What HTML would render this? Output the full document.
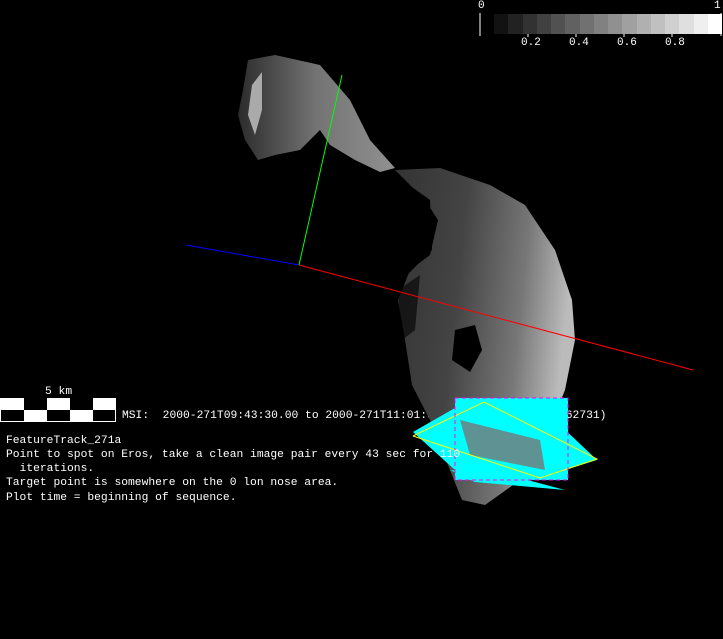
<!DOCTYPE html>
<html><head><style>
body{margin:0;background:#000;width:723px;height:639px;overflow:hidden;position:relative;font-family:"Liberation Mono",monospace;color:#fff}
.t{position:absolute;font-size:11.3px;white-space:pre;line-height:12px}
.c{position:absolute;font-size:11px;white-space:pre;line-height:12px}
</style></head><body>
<div class="t" style="left:122px;top:410px">MSI:  2000-271T09:43:30.00 to 2000-271T11:01:39.00 (6.</div>
<div class="t" style="left:559px;top:410px">462731)</div>
<svg width="723" height="639" style="position:absolute;left:0;top:0">
<defs>
<linearGradient id="g1" x1="0" y1="0" x2="1" y2="0"><stop offset="0" stop-color="#333"/><stop offset="0.5" stop-color="#888"/><stop offset="1" stop-color="#aaa"/></linearGradient>
<linearGradient id="g2" x1="0" y1="0" x2="1" y2="0.2"><stop offset="0" stop-color="#333"/><stop offset="0.4" stop-color="#444"/><stop offset="0.75" stop-color="#777"/><stop offset="1" stop-color="#bbb"/></linearGradient>
</defs>
<path d="M248,60 L275,55 L320,65 L350,100 L370,140 L395,168 L380,172 L355,160 L330,145 L320,130 L300,150 L275,155 L258,160 L245,140 L238,115 L243,90Z" fill="url(#g1)" opacity="0.85"/>
<path d="M252,85 L262,72 L262,110 L255,135 L248,115Z" fill="#aaa"/>
<path d="M395,170 L440,168 L490,185 L525,205 L555,250 L572,300 L575,340 L565,390 L545,440 L520,480 L485,505 L462,500 L450,470 L430,420 L412,385 L405,340 L398,300 L410,270 L430,255 L438,220 L425,200Z" fill="url(#g2)"/>
<path d="M395,175 L430,200 L432,250 L410,272 L395,285 L380,240Z" fill="#000"/>
<path d="M398,290 L420,275 L415,330 L402,340Z" fill="#000" opacity="0.6"/>
<path d="M455,330 L475,325 L482,350 L470,372 L452,360Z" fill="#000"/>
<line x1="186" y1="245" x2="299" y2="265" stroke="#00f" stroke-width="1"/>
<line x1="299" y1="265" x2="693" y2="370" stroke="#f00" stroke-width="1"/>
<line x1="299" y1="265" x2="342" y2="75" stroke="#0f0" stroke-width="1"/>
<polygon points="455,398 568,398 568,480 455,480" fill="#0ff"/>
<polygon points="413,432 455,408 455,470" fill="#0ff"/>
<polygon points="560,425 597,460 565,470" fill="#0ff"/>
<polygon points="450,470 520,478 565,490 475,482" fill="#0ff"/>
<polygon points="460,420 540,440 545,470 470,455" fill="#777" opacity="0.8"/>
<polyline points="413,436 484,402 597,459 540,478 413,436" fill="none" stroke="#ff0" stroke-width="1"/>
<rect x="455" y="398" width="113" height="82" fill="none" stroke="#f0f" stroke-dasharray="4,3"/>
<rect x="0" y="398" width="116" height="24" fill="#fff"/>
<g fill="#000"><rect x="24" y="398" width="23" height="12"/><rect x="70" y="398" width="23" height="12"/><rect x="1" y="410" width="23" height="11"/><rect x="47" y="410" width="23" height="11"/><rect x="93" y="410" width="22" height="11"/></g>
<line x1="480" y1="13" x2="480" y2="36" stroke="#fff"/>
<line x1="721" y1="13" x2="721" y2="36" stroke="#fff"/>
<g stroke="#fff"><line x1="528" y1="34" x2="528" y2="37"/><line x1="576" y1="34" x2="576" y2="37"/><line x1="624" y1="34" x2="624" y2="37"/><line x1="672" y1="34" x2="672" y2="37"/></g>
</svg>
<div id="bar" style="position:absolute;left:494px;top:14px;height:20px;width:228px;display:flex"></div>
<div class="c" style="left:478px;top:0px">0</div>
<div class="c" style="left:714px;top:0px">1</div>
<div class="c" style="left:521px;top:37px">0.2</div>
<div class="c" style="left:569px;top:37px">0.4</div>
<div class="c" style="left:617px;top:37px">0.6</div>
<div class="c" style="left:665px;top:37px">0.8</div>
<div class="t" style="left:45px;top:386px">5 km</div>
<div class="t" style="left:6px;top:435px">FeatureTrack_271a</div>
<div class="t" style="left:6px;top:449px">Point to spot on Eros, take a clean image pair every 43 sec for 110</div>
<div class="t" style="left:6px;top:463px">  iterations.</div>
<div class="t" style="left:6px;top:477px">Target point is somewhere on the 0 lon nose area.</div>
<div class="t" style="left:6px;top:492px">Plot time = beginning of sequence.</div>
<script>
var b=document.getElementById('bar');
for(var i=0;i<16;i++){var d=document.createElement('div');var v=Math.round(18+i*(237/15));d.style.cssText='flex:1;background:rgb('+v+','+v+','+v+')';b.appendChild(d);}
</script>
</body></html>
